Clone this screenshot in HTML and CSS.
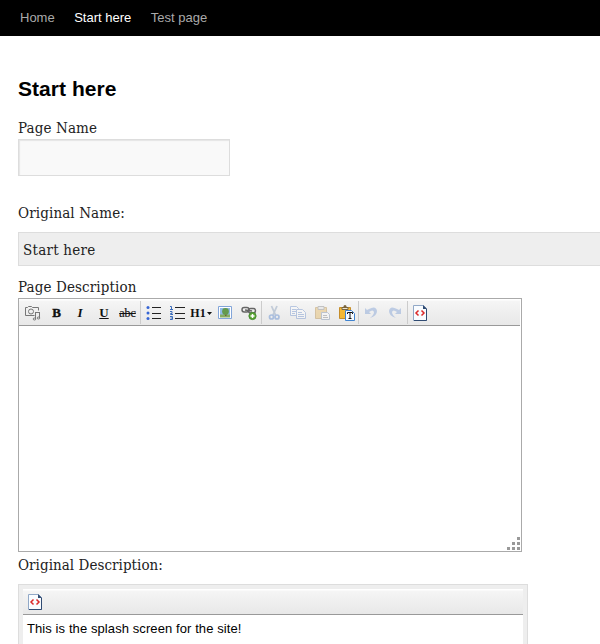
FILE: index.html
```html
<!DOCTYPE html>
<html lang="en">
<head>
<meta charset="utf-8">
<title>Start here</title>
<link rel="stylesheet" href="styles.css">
</head>
<body>
<nav class="nav"><a>Home</a><a class="current">Start here</a><a>Test page</a></nav>
<main>
<h1>Start here</h1>
<label class="label" for="name">Page Name</label>
<input class="name-input" id="name" type="text">
<div class="label original-name">Original Name:</div>
<div class="readonly">Start here</div>
<div class="label desc-label">Page Description</div>
<section class="editor">
<div class="toolbar">
<div class="group g1">
<span class="tool"><svg width="16" height="16" viewBox="0 0 16 16" fill="none" stroke="#777"><path d="M9.500 10.500h-9v-8h2l1-1h3l1 1h6v3"/><circle cx="6" cy="6.500" r="2.500"/><path d="M14.500 7v6M10.500 7v7M10.500 7.500h4" /><ellipse cx="9.500" cy="14" rx="1.300" ry="1"/><ellipse cx="13.500" cy="13" rx="1.300" ry="1"/></svg></span>
<span class="tool glyph bold">B</span>
<span class="tool glyph italic">I</span>
<span class="tool glyph underline">U</span>
<span class="tool glyph strike">abc</span>
</div>
<div class="group g2">
<span class="tool"><svg width="16" height="16" viewBox="0 0 16 16"><path d="M7 2.500h9M7 8.500h9M7 13.500h9" stroke="#222"/><g fill="#3565d5"><circle cx="3" cy="2.500" r="1.500"/><circle cx="3" cy="8" r="1.500"/><circle cx="3" cy="13.500" r="1.500"/></g></svg></span>
<span class="tool"><svg width="16" height="16" viewBox="0 0 16 16" fill="none"><path d="M6 2.500h10M6 8.500h10M6 13.500h10" stroke="#222"/><path d="M1 1.500h1.500v3M1 4.500h3M1 6.500h2v2H1.500v1H4M1 11.500h2.500v3H1M1.500 13h2" stroke="#3c6dbb"/></svg></span>
<span class="tool glyph h1-tool">H1<svg width="5" height="3" viewBox="0 0 5 3"><path d="M0 0h5L2.500 3z" fill="#111"/></svg></span>
<span class="tool"><svg width="16" height="16" viewBox="0 0 16 16"><path d="M1.500 1.500h13v12h-13z" fill="#fff" stroke="#82a5d9"/><path d="M3 3h10v8H3z" fill="#91bce8"/><path d="M3 9.500h10v3H3z" fill="#86ad62"/><path d="M8 8h1.500v3H8z" fill="#775a35"/><circle cx="8.500" cy="6.500" r="3.400" fill="#649a4d"/></svg></span>
<span class="tool"><svg width="16" height="16" viewBox="0 0 16 16"><g fill="none" stroke="#666" stroke-width="1.500"><rect x="1" y="2.500" width="7" height="4.500" rx="2.200"/><rect x="7.500" y="3.500" width="7" height="4.500" rx="2.200"/><path d="M4 5l7 1"/></g><circle cx="11.500" cy="11" r="3.600" fill="#5aa532" stroke="#448a30"/><path d="M9.500 11h4M11.500 9v4" stroke="#fff" stroke-width="1.500"/></svg></span>
</div>
<div class="group g3">
<span class="tool faded"><svg width="16" height="16" viewBox="0 0 16 16" fill="none"><path d="M5.500 1l4 9M11 1L7 10" stroke="#7790b2" stroke-width="1.800"/><circle cx="5.500" cy="12" r="2" stroke="#3f74c8" stroke-width="1.700"/><circle cx="11" cy="12" r="2" stroke="#3f74c8" stroke-width="1.700"/></svg></span>
<span class="tool faded"><svg width="16" height="16" viewBox="0 0 16 16" fill="#fff" stroke="#5d83c8"><path d="M.5 1.500h6l2 2v7h-8z"/><path d="M2 4.500h4M2 6.500h4M2 8.500h3"/><path d="M6.500 4.500h6l3 3v6h-9z"/><path d="M8 7.500h4M8 9.500h6M8 11.500h6"/></svg></span>
<span class="tool faded"><svg width="16" height="16" viewBox="0 0 16 16"><path d="M1.500 2.500h11v11h-11z" fill="#e3b04b" stroke="#ac7b28"/><path d="M4 1.500h6v3H4z" fill="#ddd" stroke="#777"/><path d="M7.500 7.500h6l2 2v5h-8z" fill="#fff" stroke="#6980a0"/><path d="M9 10.500h4M9 12.500h5" stroke="#777"/></svg></span>
<span class="tool"><svg width="17" height="16" viewBox="0 0 17 16"><path d="M1.500 2.500h11v11h-11z" fill="#f4b834" stroke="#c58d2a"/><path d="M4 2.500h6v2H4z" fill="#ece6cf" stroke="#776340"/><circle cx="7" cy="1.500" r="1.500" fill="#7b6439"/><path d="M7.500 5.500h6l3 3v7h-9z" fill="#f7fbff" stroke="#3f83d0"/><path d="M9.500 9V7.500h5V9M12 7.500v6M10.500 13.500h3" fill="none" stroke="#111"/></svg></span>
</div>
<div class="group g4">
<span class="tool faded"><svg width="16" height="16" viewBox="0 0 16 16"><path d="M2 3v6h6L6 7q4-3 5 0 0 3-4 6 7-2 7-7-1-6-8-2L4 5z" fill="#6b91d0"/></svg></span>
<span class="tool faded"><svg class="flip" width="16" height="16" viewBox="0 0 16 16"><path d="M2 3v6h6L6 7q4-3 5 0 0 3-4 6 7-2 7-7-1-6-8-2L4 5z" fill="#6b91d0"/></svg></span>
</div>
<div class="group">
<span class="tool"><svg width="14" height="16" viewBox="0 0 14 16" fill="none"><path d="M.5.500h10l3 3v12H.500z" fill="#f9fcff" stroke="#91a8c7"/><path d="M13.500 4v11.500H1" stroke="#304b72"/><path d="M10 0v4h4z" fill="#304b72"/><path d="M5.500 5.500L3 8l2.500 2.500M8.500 5.500L11 8l-2.500 2.500" stroke="#dc2929" stroke-width="1.500"/></svg></span>
</div>
</div>
<svg class="grip" width="14" height="13" viewBox="0 0 14 13" fill="#999"><path d="M11 0h3v3h-3zM6 5h3v3H6zM11 5h3v3h-3zM1 10h3v3H1zM6 10h3v3H6zM11 10h3v3h-3z"/></svg>
</section>
<div class="label original-desc">Original Description:</div>
<section class="preview">
<div class="toolbar preview-bar"><span class="tool"><svg width="14" height="16" viewBox="0 0 14 16" fill="none"><path d="M.5.500h10l3 3v12H.500z" fill="#f9fcff" stroke="#91a8c7"/><path d="M13.500 4v11.500H1" stroke="#304b72"/><path d="M10 0v4h4z" fill="#304b72"/><path d="M5.500 5.500L3 8l2.500 2.500M8.500 5.500L11 8l-2.500 2.500" stroke="#dc2929" stroke-width="1.500"/></svg></span></div>
<div class="preview-text">This is the splash screen for the site!</div>
</section>
</main>
</body>
</html>
```
FILE: styles.css
```css
* { box-sizing: border-box; }
html { overflow: hidden; }
body { margin: 0; height: 644px; overflow: hidden; background: #fff; color: #222; font-family: "Liberation Sans", Arial, sans-serif; }
.nav { display: flex; gap: 19.5px; height: 36px; padding-left: 20px; background: #000; font-size: 13px; line-height: 35px; color: #aaa; }
.nav .current { color: #fff; }
main { padding: 41px 0 0 18px; }
h1 { margin: 0; height: 41px; font-size: 21px; line-height: 24px; letter-spacing: .05px; color: #000; }
.label { display: block; height: 20px; font: 15px/20px "DejaVu Serif Condensed", "DejaVu Serif", serif; letter-spacing: .12px; white-space: nowrap; }
.name-input { display: block; width: 212px; height: 37px; margin-top: 1px; border: 1px solid #ddd; background: #f9f9f9; box-shadow: inset 1px 1px 1px #e5e5e5; }
.original-name { margin-top: 27px; }
.readonly { height: 34px; margin-top: 9px; padding-left: 4px; border: 1px solid #ddd; border-right: 0; background: #eee; font: 15px/34px "DejaVu Serif Condensed", "DejaVu Serif", serif; letter-spacing: .25px; }
.desc-label { margin-top: 11px; }
.editor { position: relative; width: 504px; height: 254px; margin-top: 1px; border: 1px solid #aaa; }
.toolbar { display: flex; height: 27px; padding: 2px 0 0 2px; border-bottom: 1px solid #999; background: linear-gradient(#fff 1px, #f5f5f5 2px, #e8e8e8); }
.editor .toolbar { margin-right: 1px; }
.group { display: flex; height: 23px; }
.g1, .g2, .g3, .g4 { border-right: 1px solid #ccc; }
.g1 { width: 120px; }
.g2 { width: 121px; }
.g3 { width: 97px; }
.g4 { width: 49px; }
.tool { display: flex; flex: 0 0 24px; height: 24px; align-items: center; justify-content: center; }
.tool svg { flex: none; }
.glyph { padding-right: 1px; font-family: "Liberation Serif", serif; font-size: 13px; color: #111; }
.bold { font-weight: bold; -webkit-text-stroke: .4px #111; }
.italic { padding-right: 2px; font-style: italic; font-weight: bold; }
.underline { padding-right: 2px; font-weight: bold; text-decoration: underline; }
.strike { padding-right: 3px; font-size: 12px; text-decoration: line-through; -webkit-text-stroke: .2px #111; }
.h1-tool { gap: 1px; padding: 0; font-size: 12px; font-weight: bold; }
.faded { opacity: .38; }
.flip { transform: scaleX(-1); }
.grip { position: absolute; right: 1px; bottom: 1px; }
.original-desc { margin-top: 3px; letter-spacing: .05px; }
.preview { width: 510px; height: 90px; margin-top: 9px; padding: 4px 4px 0; border: 1px solid #ddd; background: #eee; }
.preview-bar { height: 26px; padding: 1px 0 0; }
.preview-text { height: 60px; padding: 5px 0 0 4px; background: #fff; font-size: 13px; line-height: 18px; letter-spacing: .09px; color: #000; }
```
